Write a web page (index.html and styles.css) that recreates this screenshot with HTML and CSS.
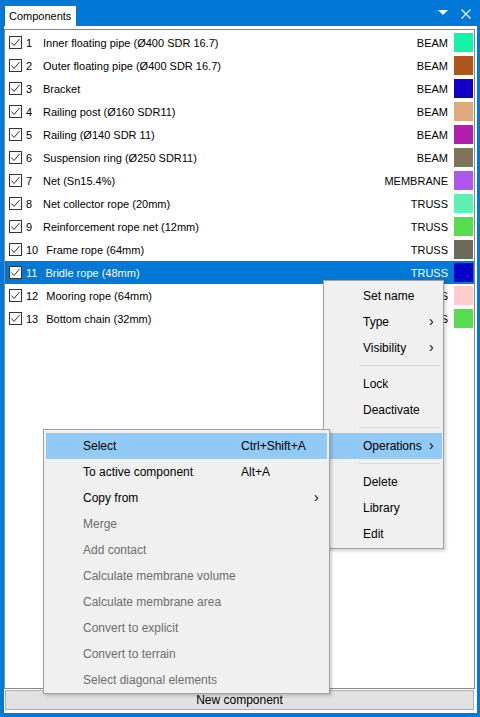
FILE: index.html
```html
<!DOCTYPE html>
<html>
<head>
<meta charset="utf-8">
<link rel="stylesheet" href="styles.css">
</head>
<body>
<div class="window">
  <div class="titlebar">
    <div class="tab">Components</div>
    <div class="tb-icons">
      <svg class="tb-drop" width="10" height="6" viewBox="0 0 10 6"><polygon points="0,0 10,0 5,5" fill="#fff"/></svg>
      <svg class="tb-close" width="10" height="10" viewBox="0 0 10 10"><path d="M0.5 0.5 L9.5 9.5 M9.5 0.5 L0.5 9.5" stroke="#fff" stroke-width="1.1" fill="none"/></svg>
    </div>
  </div>
  <div class="content">
    <div class="panel">
      <div class="row"><span class="cb"><svg width="13" height="13" viewBox="0 0 13 13"><rect x="0.5" y="0.5" width="12" height="12" fill="#fff" stroke="#333"/><polyline points="2.5,6.5 5,9.5 10.5,3" fill="none" stroke="#333" stroke-width="1"/></svg></span><span class="num">1</span><span class="name">Inner floating pipe (Ø400 SDR 16.7)</span><span class="type">BEAM</span><span class="sw" style="background:#12f4a8"></span></div>
      <div class="row"><span class="cb"><svg width="13" height="13" viewBox="0 0 13 13"><rect x="0.5" y="0.5" width="12" height="12" fill="#fff" stroke="#333"/><polyline points="2.5,6.5 5,9.5 10.5,3" fill="none" stroke="#333" stroke-width="1"/></svg></span><span class="num">2</span><span class="name">Outer floating pipe (Ø400 SDR 16.7)</span><span class="type">BEAM</span><span class="sw" style="background:#b0541e"></span></div>
      <div class="row"><span class="cb"><svg width="13" height="13" viewBox="0 0 13 13"><rect x="0.5" y="0.5" width="12" height="12" fill="#fff" stroke="#333"/><polyline points="2.5,6.5 5,9.5 10.5,3" fill="none" stroke="#333" stroke-width="1"/></svg></span><span class="num">3</span><span class="name">Bracket</span><span class="type">BEAM</span><span class="sw" style="background:#1400c8"></span></div>
      <div class="row"><span class="cb"><svg width="13" height="13" viewBox="0 0 13 13"><rect x="0.5" y="0.5" width="12" height="12" fill="#fff" stroke="#333"/><polyline points="2.5,6.5 5,9.5 10.5,3" fill="none" stroke="#333" stroke-width="1"/></svg></span><span class="num">4</span><span class="name">Railing post (Ø160 SDR11)</span><span class="type">BEAM</span><span class="sw" style="background:#e0aa7e"></span></div>
      <div class="row"><span class="cb"><svg width="13" height="13" viewBox="0 0 13 13"><rect x="0.5" y="0.5" width="12" height="12" fill="#fff" stroke="#333"/><polyline points="2.5,6.5 5,9.5 10.5,3" fill="none" stroke="#333" stroke-width="1"/></svg></span><span class="num">5</span><span class="name">Railing (Ø140 SDR 11)</span><span class="type">BEAM</span><span class="sw" style="background:#b01eae"></span></div>
      <div class="row"><span class="cb"><svg width="13" height="13" viewBox="0 0 13 13"><rect x="0.5" y="0.5" width="12" height="12" fill="#fff" stroke="#333"/><polyline points="2.5,6.5 5,9.5 10.5,3" fill="none" stroke="#333" stroke-width="1"/></svg></span><span class="num">6</span><span class="name">Suspension ring (Ø250 SDR11)</span><span class="type">BEAM</span><span class="sw" style="background:#7e7458"></span></div>
      <div class="row"><span class="cb"><svg width="13" height="13" viewBox="0 0 13 13"><rect x="0.5" y="0.5" width="12" height="12" fill="#fff" stroke="#333"/><polyline points="2.5,6.5 5,9.5 10.5,3" fill="none" stroke="#333" stroke-width="1"/></svg></span><span class="num">7</span><span class="name">Net (Sn15.4%)</span><span class="type">MEMBRANE</span><span class="sw" style="background:#b056f0"></span></div>
      <div class="row"><span class="cb"><svg width="13" height="13" viewBox="0 0 13 13"><rect x="0.5" y="0.5" width="12" height="12" fill="#fff" stroke="#333"/><polyline points="2.5,6.5 5,9.5 10.5,3" fill="none" stroke="#333" stroke-width="1"/></svg></span><span class="num">8</span><span class="name">Net collector rope (20mm)</span><span class="type">TRUSS</span><span class="sw" style="background:#5ef2b2"></span></div>
      <div class="row"><span class="cb"><svg width="13" height="13" viewBox="0 0 13 13"><rect x="0.5" y="0.5" width="12" height="12" fill="#fff" stroke="#333"/><polyline points="2.5,6.5 5,9.5 10.5,3" fill="none" stroke="#333" stroke-width="1"/></svg></span><span class="num">9</span><span class="name">Reinforcement rope net (12mm)</span><span class="type">TRUSS</span><span class="sw" style="background:#56dc50"></span></div>
      <div class="row"><span class="cb"><svg width="13" height="13" viewBox="0 0 13 13"><rect x="0.5" y="0.5" width="12" height="12" fill="#fff" stroke="#333"/><polyline points="2.5,6.5 5,9.5 10.5,3" fill="none" stroke="#333" stroke-width="1"/></svg></span><span class="num">10</span><span class="name">Frame rope (64mm)</span><span class="type">TRUSS</span><span class="sw" style="background:#6c6a5a"></span></div>
      <div class="row sel"><span class="cb"><svg width="13" height="13" viewBox="0 0 13 13"><rect x="0.5" y="0.5" width="12" height="12" fill="#fff" stroke="#333"/><polyline points="2.5,6.5 5,9.5 10.5,3" fill="none" stroke="#333" stroke-width="1"/></svg></span><span class="num">11</span><span class="name">Bridle rope (48mm)</span><span class="type">TRUSS</span><span class="sw" style="background:#0000c8"></span></div>
      <div class="row"><span class="cb"><svg width="13" height="13" viewBox="0 0 13 13"><rect x="0.5" y="0.5" width="12" height="12" fill="#fff" stroke="#333"/><polyline points="2.5,6.5 5,9.5 10.5,3" fill="none" stroke="#333" stroke-width="1"/></svg></span><span class="num">12</span><span class="name">Mooring rope (64mm)</span><span class="type">TRUSS</span><span class="sw" style="background:#ffcccc"></span></div>
      <div class="row"><span class="cb"><svg width="13" height="13" viewBox="0 0 13 13"><rect x="0.5" y="0.5" width="12" height="12" fill="#fff" stroke="#333"/><polyline points="2.5,6.5 5,9.5 10.5,3" fill="none" stroke="#333" stroke-width="1"/></svg></span><span class="num">13</span><span class="name">Bottom chain (32mm)</span><span class="type">TRUSS</span><span class="sw" style="background:#56dc50"></span></div>
    </div>
    <div class="newbtn">New component</div>
  </div>

  <div class="menu main-menu">
    <div class="mi">Set name</div>
    <div class="mi">Type<span class="arr">›</span></div>
    <div class="mi">Visibility<span class="arr">›</span></div>
    <div class="sep"></div>
    <div class="mi">Lock</div>
    <div class="mi">Deactivate</div>
    <div class="sep"></div>
    <div class="mi hl">Operations<span class="arr">›</span></div>
    <div class="sep"></div>
    <div class="mi">Delete</div>
    <div class="mi">Library</div>
    <div class="mi">Edit</div>
  </div>

  <div class="menu sub-menu">
    <div class="mi hl"><span class="lbl">Select</span><span class="sc">Ctrl+Shift+A</span></div>
    <div class="mi"><span class="lbl">To active component</span><span class="sc">Alt+A</span></div>
    <div class="mi"><span class="lbl">Copy from</span><span class="arr">›</span></div>
    <div class="mi dis"><span class="lbl">Merge</span></div>
    <div class="mi dis"><span class="lbl">Add contact</span></div>
    <div class="mi dis"><span class="lbl">Calculate membrane volume</span></div>
    <div class="mi dis"><span class="lbl">Calculate membrane area</span></div>
    <div class="mi dis"><span class="lbl">Convert to explicit</span></div>
    <div class="mi dis"><span class="lbl">Convert to terrain</span></div>
    <div class="mi dis"><span class="lbl">Select diagonal elements</span></div>
  </div>
</div>
</body>
</html>
```

FILE: styles.css
```css
* { box-sizing: border-box; }
html, body { margin: 0; padding: 0; }
body {
  width: 480px;
  height: 717px;
  overflow: hidden;
  font-family: "Liberation Sans", Arial, sans-serif;
  font-size: 12px;
  color: #000;
}
.window {
  position: relative;
  width: 480px;
  height: 717px;
  background: #0078d7;
  display: flex;
  flex-direction: column;
}
.titlebar {
  height: 26px;
  display: flex;
  align-items: flex-end;
  padding-left: 5px;
  flex: none;
}
.tab {
  width: 71px;
  height: 20px;
  background: #fff;
  padding-left: 4px;
  line-height: 21px;
  font-size: 11px;
  white-space: nowrap;
}
.tb-icons {
  margin-left: auto;
  align-self: flex-start;
  display: flex;
  align-items: flex-start;
  padding-top: 9px;
  padding-right: 9px;
  gap: 13px;
}
.tb-drop { margin-top: 1px; }
.content {
  flex: 1;
  background: #fff;
  margin: 0 3px 4px 4px;
  padding-top: 3px;
  display: flex;
  flex-direction: column;
}
.panel {
  height: 660px;
  border: 1px solid #828790;
  margin-right: 2px;
  padding-top: 1px;
  flex: none;
}
.row {
  height: 23px;
  display: flex;
  align-items: center;
  padding-left: 4px;
  font-size: 11px;
}
.row.sel { background: #0078d7; color: #fff; }
.cb { width: 13px; height: 13px; display: block; flex: none; }
.cb svg { display: block; }
.num { margin-left: 4px; margin-right: 8px; min-width: 9px; }
.name { flex: 1; white-space: nowrap; }
.type { margin-right: 6px; }
.sw { width: 19px; height: 19px; flex: none; margin-right: 1px; }
.newbtn {
  margin: 1px 3px 0 1px;
  height: 20px;
  background: #e1e1e1;
  border: 1px solid #adadad;
  text-align: center;
  line-height: 18px;
  font-size: 12px;
}
.menu {
  position: absolute;
  background: #f0f0f0;
  border: 1px solid #a0a0a0;
  box-shadow: 2px 2px 3px rgba(0,0,0,0.18);
}
.main-menu {
  left: 323px;
  top: 280px;
  width: 121px;
  padding: 2px 1px 1px 1px;
}
.sub-menu {
  left: 43px;
  top: 429px;
  width: 287px;
  padding: 3px 2px 0 2px;
  height: 265px;
}
.mi {
  height: 26px;
  display: flex;
  align-items: center;
  position: relative;
  white-space: nowrap;
}
.main-menu .mi { padding-left: 38px; }
.sub-menu .mi { padding-left: 37px; }
.mi.hl { background: #91c9f7; }
.mi.dis { color: #6d6d6d; }
.lbl { width: 158px; }
.arr {
  position: absolute;
  font-size: 14px;
  top: 4px;
}
.main-menu .arr { left: 104px; }
.sub-menu .arr { left: 268px; }
.sep {
  height: 10px;
  position: relative;
}
.sep::after {
  content: "";
  position: absolute;
  left: 34px;
  right: 2px;
  top: 4px;
  height: 1px;
  background: #d7d7d7;
}
```
